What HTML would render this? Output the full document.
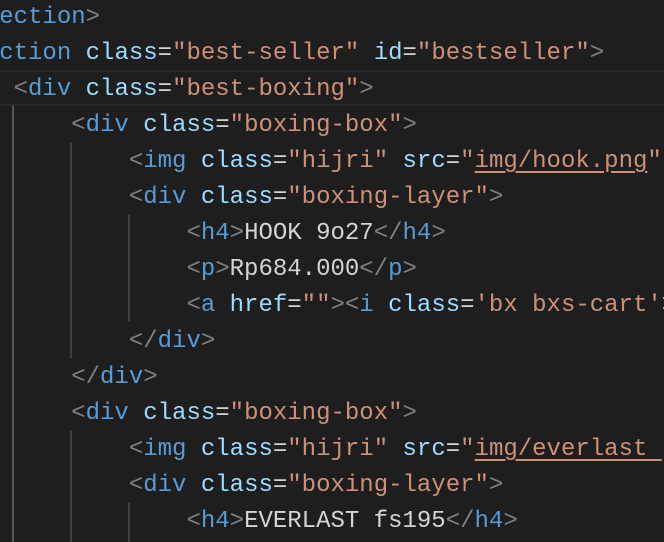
<!DOCTYPE html>
<html><head><style>
html,body{margin:0;padding:0;background:#1e1e1e;width:664px;height:542px;overflow:hidden;position:relative}
.l{position:absolute;left:-44px;height:36px;line-height:36px;white-space:pre;font-family:"Liberation Mono",monospace;font-size:24px;color:#d4d4d4;margin-top:2px}
.b{color:#808080}.t{color:#569cd6}.a{color:#9cdcfe}.s{color:#ce9178}.u{text-decoration:underline;text-underline-offset:4px}
.g{position:absolute;width:2px;background:#404040}
.hl{position:absolute;left:0;width:664px;top:70px;height:32px;border-top:2px solid #2a2a2a;border-bottom:2px solid #2a2a2a}
</style></head><body>
<div class="hl"></div>
<div class="g" style="left:12px;top:106px;height:436px;background:#585858"></div>
<div class="g" style="left:70px;top:142px;height:216px"></div>
<div class="g" style="left:70px;top:430px;height:112px"></div>
<div class="g" style="left:128px;top:214px;height:108px"></div>
<div class="g" style="left:128px;top:502px;height:40px"></div>
<div class="l" style="top:-2px"><span class="b">&lt;/</span><span class="t">section</span><span class="b">&gt;</span></div>
<div class="l" style="top:34px"><span class="b">&lt;</span><span class="t">section</span> <span class="a">class</span>=<span class="s">"best-seller"</span> <span class="a">id</span>=<span class="s">"bestseller"</span><span class="b">&gt;</span></div>
<div class="l" style="top:70px">    <span class="b">&lt;</span><span class="t">div</span> <span class="a">class</span>=<span class="s">"best-boxing"</span><span class="b">&gt;</span></div>
<div class="l" style="top:106px">        <span class="b">&lt;</span><span class="t">div</span> <span class="a">class</span>=<span class="s">"boxing-box"</span><span class="b">&gt;</span></div>
<div class="l" style="top:142px">            <span class="b">&lt;</span><span class="t">img</span> <span class="a">class</span>=<span class="s">"hijri"</span> <span class="a">src</span>=<span class="s">"<span class="u">img/hook.png</span>"</span></div>
<div class="l" style="top:178px">            <span class="b">&lt;</span><span class="t">div</span> <span class="a">class</span>=<span class="s">"boxing-layer"</span><span class="b">&gt;</span></div>
<div class="l" style="top:214px">                <span class="b">&lt;</span><span class="t">h4</span><span class="b">&gt;</span>HOOK 9o27<span class="b">&lt;/</span><span class="t">h4</span><span class="b">&gt;</span></div>
<div class="l" style="top:250px">                <span class="b">&lt;</span><span class="t">p</span><span class="b">&gt;</span>Rp684.000<span class="b">&lt;/</span><span class="t">p</span><span class="b">&gt;</span></div>
<div class="l" style="top:286px">                <span class="b">&lt;</span><span class="t">a</span> <span class="a">href</span>=<span class="s">""</span><span class="b">&gt;&lt;</span><span class="t">i</span> <span class="a">class</span>=<span class="s">'bx bxs-cart'</span>&gt;</div>
<div class="l" style="top:322px">            <span class="b">&lt;/</span><span class="t">div</span><span class="b">&gt;</span></div>
<div class="l" style="top:358px">        <span class="b">&lt;/</span><span class="t">div</span><span class="b">&gt;</span></div>
<div class="l" style="top:394px">        <span class="b">&lt;</span><span class="t">div</span> <span class="a">class</span>=<span class="s">"boxing-box"</span><span class="b">&gt;</span></div>
<div class="l" style="top:430px">            <span class="b">&lt;</span><span class="t">img</span> <span class="a">class</span>=<span class="s">"hijri"</span> <span class="a">src</span>=<span class="s">"<span class="u">img/everlast </span></span></div>
<div class="l" style="top:466px">            <span class="b">&lt;</span><span class="t">div</span> <span class="a">class</span>=<span class="s">"boxing-layer"</span><span class="b">&gt;</span></div>
<div class="l" style="top:502px">                <span class="b">&lt;</span><span class="t">h4</span><span class="b">&gt;</span>EVERLAST fs195<span class="b">&lt;/</span><span class="t">h4</span><span class="b">&gt;</span></div>
</body></html>
